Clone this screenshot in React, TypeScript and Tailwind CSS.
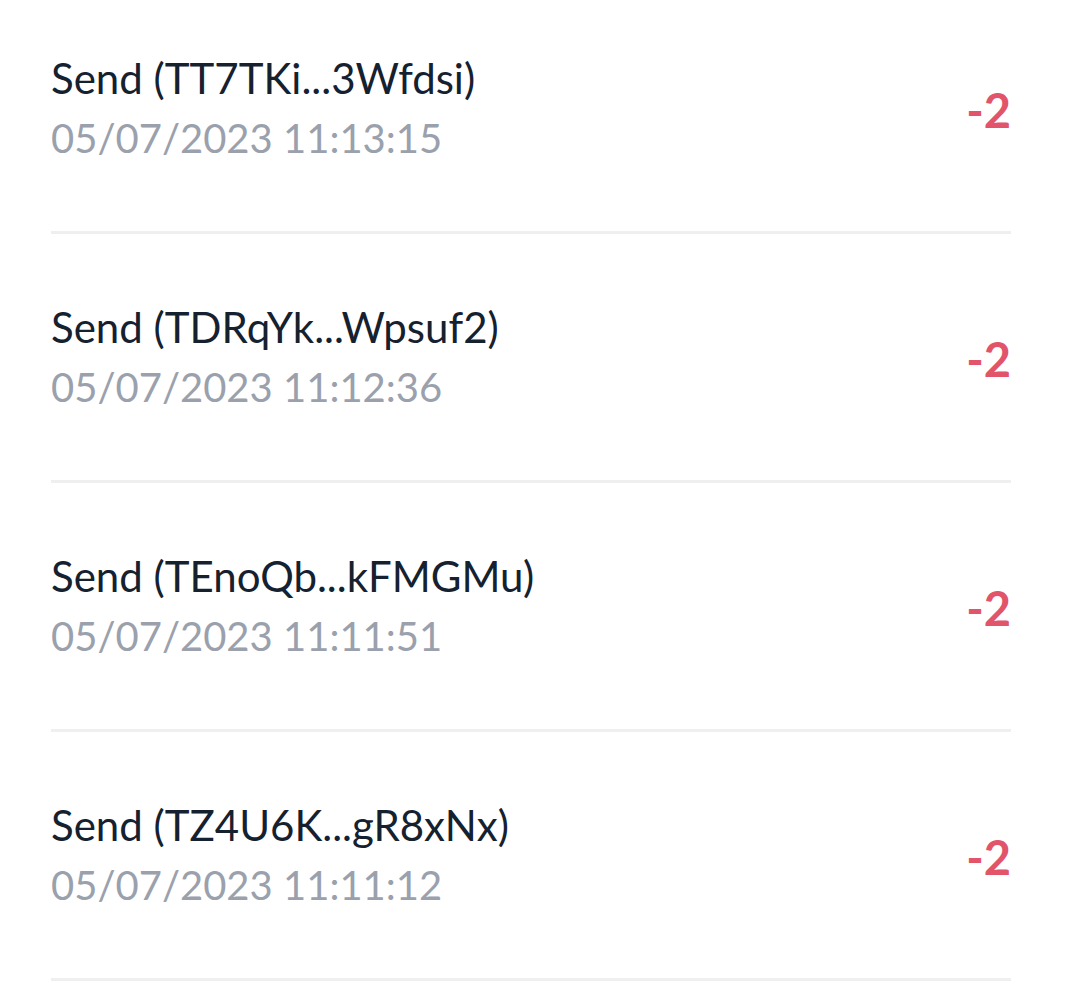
const items = [
  { title: "Send (TT7TKi...3Wfdsi)", date: "05/07/2023 11:13:15", amount: "-2" },
  { title: "Send (TDRqYk...Wpsuf2)", date: "05/07/2023 11:12:36", amount: "-2" },
  { title: "Send (TEnoQb...kFMGMu)", date: "05/07/2023 11:11:51", amount: "-2" },
  { title: "Send (TZ4U6K...gR8xNx)", date: "05/07/2023 11:11:12", amount: "-2" },
];

export default function App() {
  return (
    <div className="h-[995px] w-[1071px] overflow-hidden bg-white font-['Lato','Noto_Sans',sans-serif]">
      <div className="-mt-[15px] pl-[51px] pr-[60px]">
        {items.map((item) => (
          <div
            key={item.date}
            className="flex h-[249px] items-center justify-between border-b-[3px] border-[#efefef]"
          >
            <div className="flex flex-col">
              <span className="text-[42px] leading-[58px] text-[#15212f]">{item.title}</span>
              <span className="mt-[2px] text-[40px] leading-[58px] text-[#9aa1ad]">{item.date}</span>
            </div>
            <span className="pt-[4px] text-[47px] font-bold text-[#e1546a]">{item.amount}</span>
          </div>
        ))}
      </div>
    </div>
  );
}
